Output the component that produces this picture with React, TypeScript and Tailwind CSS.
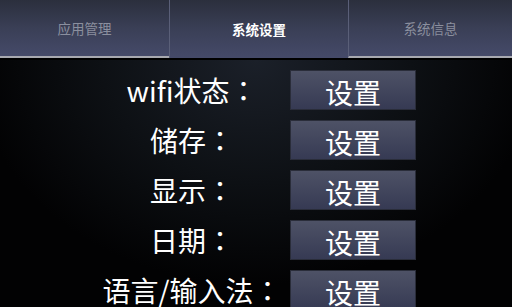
const tabs = [
  { name: "应用管理", active: false },
  { name: "系统设置", active: true },
  { name: "系统信息", active: false },
];

const rows = ["wifi状态", "储存", "显示", "日期", "语言/输入法"];

export default function App() {
  return (
    <div
      className="w-[512px] h-[307px] overflow-hidden flex flex-col bg-black"
      style={{ fontFamily: '"Noto Sans CJK SC", "Noto Sans", sans-serif' }}
    >
      {/* Tabs */}
      <div className="flex h-[60px] shrink-0 bg-black">
        {tabs.map((tab, i) => (
          <div
            key={tab.name}
            className={`flex items-center justify-center h-[58px] bg-linear-to-b from-[#2b2f3d] via-[#3a3f56] to-[#454a69] ${
              i === 0 ? "w-[169px]" : i === 1 ? "w-[179px]" : "flex-1"
            } ${i > 0 ? "border-l border-[#5a5f78]" : ""} ${
              tab.active ? "" : "border-b-2 border-b-[#a8a9b0]"
            }`}
          >
            <span
              className={`text-[13.5px] pt-[1px] ${
                tab.active ? "text-white font-bold" : "text-[#8b8f9e]"
              }`}
            >
              {tab.name}
            </span>
          </div>
        ))}
      </div>

      {/* Settings list */}
      <div className="flex-1 flex flex-col gap-[10px] pt-[10px] bg-[radial-gradient(ellipse_55%_90%_at_50%_0%,#1b2029_0%,#0d1014_55%,#020203_100%)]">
        {rows.map((label) => (
          <div key={label} className="flex items-center pl-[100px]">
            <div className="w-[184px] text-center text-white text-[28px] leading-[40px] whitespace-nowrap">
              {label}
              <span style={{ fontFamily: '"Noto Sans CJK TC", sans-serif' }}>：</span>
            </div>
            <button className="ml-[6px] w-[126px] h-[40px] shrink-0 flex items-center justify-center bg-linear-to-b from-[#4e5266] to-[#363a53] border border-[#2a2d3a] text-white text-[28px] leading-none pt-[3px]">
              设置
            </button>
          </div>
        ))}
      </div>
    </div>
  );
}
